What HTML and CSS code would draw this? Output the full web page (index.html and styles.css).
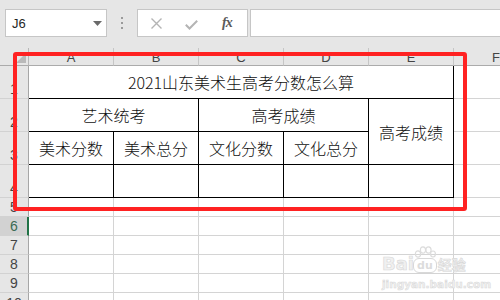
FILE: index.html
```html
<!DOCTYPE html>
<html lang="zh">
<head>
<meta charset="utf-8">
<title>Sheet</title>
<link rel="stylesheet" href="styles.css">
</head>
<body>
<div class="app">
  <div class="toolbar">
    <div class="namebox">
      <span class="ref">J6</span>
      <svg class="dd" width="9" height="5" viewBox="0 0 9 5"><path d="M0 0H9L4.5 5Z" fill="#6a6a6a"/></svg>
    </div>
    <div class="dots">
      <svg width="3" height="13" viewBox="0 0 3 13"><rect x="0" y="0" width="2" height="2" fill="#9a9a9a"/><rect x="0" y="5" width="2" height="2" fill="#9a9a9a"/><rect x="0" y="10" width="2" height="2" fill="#9a9a9a"/></svg>
    </div>
    <div class="fxbox">
      <svg class="ico-x" width="11" height="11" viewBox="0 0 11 11"><path d="M0.5 0.5L10.5 10.5M10.5 0.5L0.5 10.5" stroke="#b4b4b4" stroke-width="1.4" fill="none"/></svg>
      <svg class="ico-ok" width="13" height="10" viewBox="0 0 13 10"><path d="M0.8 4.8L4.5 8.5L12.2 0.8" stroke="#b4b4b4" stroke-width="2" fill="none"/></svg>
      <span class="fx">fx</span>
    </div>
    <div class="formula"></div>
  </div>

  <div class="sheet">
    <div class="corner"><span class="tri"></span></div>
    <div class="ch">A</div><div class="ch">B</div><div class="ch">C</div><div class="ch">D</div><div class="ch">E</div><div class="ch">F</div>

    <div class="rh">1</div>
    <div class="t span5">2021山东美术生高考分数怎么算</div>
    <div class="c"></div>

    <div class="rh">2</div>
    <div class="t span2">艺术统考</div>
    <div class="t span2">高考成绩</div>
    <div class="t rspan2">高考成绩</div>
    <div class="c"></div>

    <div class="rh">3</div>
    <div class="t">美术分数</div>
    <div class="t">美术总分</div>
    <div class="t">文化分数</div>
    <div class="t">文化总分</div>
    <div class="c"></div>

    <div class="rh">4</div>
    <div class="t"></div><div class="t"></div><div class="t"></div><div class="t"></div><div class="t"></div>
    <div class="c"></div>

    <div class="rh">5</div>
    <div class="c"></div><div class="c"></div><div class="c"></div><div class="c"></div><div class="c"></div><div class="c"></div>
    <div class="rh sel">6</div>
    <div class="c"></div><div class="c"></div><div class="c"></div><div class="c"></div><div class="c"></div><div class="c"></div>
    <div class="rh">7</div>
    <div class="c"></div><div class="c"></div><div class="c"></div><div class="c"></div><div class="c"></div><div class="c"></div>
    <div class="rh">8</div>
    <div class="c"></div><div class="c"></div><div class="c"></div><div class="c"></div><div class="c"></div><div class="c"></div>
    <div class="rh">9</div>
    <div class="c"></div><div class="c"></div><div class="c"></div><div class="c"></div><div class="c"></div><div class="c"></div>
    <div class="rh r10">10</div>
    <div class="c"></div><div class="c"></div><div class="c"></div><div class="c"></div><div class="c"></div><div class="c"></div>
  </div>

  <div class="highlight"></div>

  <div class="watermark">
    <div class="wm-top">
      <span class="wm-bai">Bai</span>
      <span class="wm-paw">
        <svg width="22" height="12" viewBox="0 0 22 12"><ellipse cx="4" cy="8" rx="2.6" ry="3.2" fill="none" stroke="#dcdcdc" stroke-width="1.2"/><ellipse cx="9" cy="4" rx="2.6" ry="3.2" fill="none" stroke="#dcdcdc" stroke-width="1.2"/><ellipse cx="14.5" cy="4" rx="2.6" ry="3.2" fill="none" stroke="#dcdcdc" stroke-width="1.2"/><ellipse cx="19" cy="8" rx="2.4" ry="3" fill="none" stroke="#dcdcdc" stroke-width="1.2"/></svg>
        <span class="wm-du">du</span>
      </span>
      <span class="wm-jy">经验</span>
    </div>
    <div class="wm-url">jingyan.baidu.com</div>
  </div>
</div>
</body>
</html>
```
FILE: styles.css
```css
html, body {
  margin: 0;
  padding: 0;
  background: #ffffff;
}

.app {
  position: relative;
  width: 500px;
  height: 300px;
  overflow: hidden;
  background: #ffffff;
  font-family: "Liberation Sans", Arial, sans-serif;
}

/* ---------- toolbar ---------- */
.toolbar {
  height: 48px;
  box-sizing: border-box;
  background: #e6e6e6;
  display: flex;
  align-items: flex-start;
  padding: 9px 0 0 5px;
}

.namebox {
  width: 102px;
  height: 28px;
  box-sizing: border-box;
  background: #ffffff;
  border: 1px solid #c6c6c6;
  display: flex;
  align-items: center;
  justify-content: space-between;
  padding: 0 4px 0 6px;
  font-size: 13px;
  color: #262626;
}

.dots {
  width: 30px;
  height: 28px;
  display: flex;
  align-items: center;
  justify-content: center;
  padding-left: 1px;
  box-sizing: border-box;
}

.fxbox {
  width: 111px;
  height: 28px;
  box-sizing: border-box;
  background: #ffffff;
  border: 1px solid #c6c6c6;
  display: flex;
  align-items: center;
  padding-left: 13px;
}

.ico-x {
  margin-top: 1px;
}

.ico-ok {
  margin-left: 23px;
  margin-top: 3px;
}

.fx {
  margin-left: 24px;
  font-family: "Liberation Serif", "DejaVu Serif", serif;
  font-style: italic;
  font-weight: bold;
  font-size: 14px;
  color: #5a5a5a;
  letter-spacing: -1px;
}

.formula {
  flex: 1;
  height: 28px;
  box-sizing: border-box;
  margin-left: 2px;
  margin-right: -3px;
  background: #ffffff;
  border: 1px solid #c6c6c6;
}

/* ---------- sheet grid ---------- */
.sheet {
  display: grid;
  grid-template-columns: 29px repeat(6, 85px);
  grid-template-rows: 18px repeat(4, 33px) repeat(6, 19px);
}

.sheet > div {
  box-sizing: border-box;
}

.corner {
  position: relative;
  background: #e6e6e6;
  border-right: 1px solid #b8b8b8;
  border-bottom: 1px solid #ababab;
}

.tri {
  position: absolute;
  right: 2px;
  bottom: 2px;
  width: 0;
  height: 0;
  border-left: 10px solid transparent;
  border-bottom: 10px solid #b9b9b9;
}

.ch {
  background: #e6e6e6;
  border-right: 1px solid #c6c6c6;
  border-bottom: 1px solid #ababab;
  color: #444444;
  font-size: 13px;
  text-align: center;
  line-height: 20px;
  overflow: hidden;
}

.rh {
  background: #e6e6e6;
  border-right: 1px solid #a6a6a6;
  border-bottom: 1px solid #d2d2d2;
  color: #444444;
  font-size: 14px;
  display: flex;
  align-items: flex-end;
  justify-content: center;
  padding-bottom: 1px;
  line-height: 16px;
  overflow: hidden;
}

.rh.sel {
  background: #d2d2d2;
  border-right: 2px solid #217346;
  color: #3a6a52;
  padding-left: 1px;
}

.rh.r10 {
  align-items: flex-start;
  padding-top: 2px;
}

.c {
  border-right: 1px solid #d4d4d4;
  border-bottom: 1px solid #d4d4d4;
}

.t {
  border-right: 1px solid #000000;
  border-bottom: 1px solid #000000;
  display: flex;
  align-items: center;
  justify-content: center;
  font-family: "Noto Sans CJK SC", "Liberation Sans", sans-serif;
  font-weight: 300;
  font-size: 16px;
  color: #111111;
  white-space: nowrap;
}

.span5 { grid-column: span 5; }
.span2 { grid-column: span 2; }
.rspan2 { grid-row: span 2; }

/* ---------- annotation overlay ---------- */
.highlight {
  position: absolute;
  left: 13px;
  top: 52px;
  width: 454px;
  height: 159px;
  box-sizing: border-box;
  border: 4px solid #ff2222;
  border-radius: 3px;
}

/* ---------- watermark ---------- */
.watermark {
  position: absolute;
  left: 382px;
  top: 246px;
  width: 92px;
  color: #e2e2e2;
  text-shadow: 0 0 1px #ffffff;
}

.wm-top {
  display: flex;
  align-items: flex-end;
  height: 27px;
}

.wm-bai {
  font-family: "DejaVu Sans", sans-serif;
  font-weight: bold;
  font-size: 18px;
  line-height: 18px;
  letter-spacing: 0px;
  -webkit-text-stroke: 0.6px #d8d8d8;
  color: #f0f0f0;
}

.wm-paw {
  display: flex;
  flex-direction: column;
  align-items: center;
  margin-left: -1px;
}

.wm-du {
  font-family: "DejaVu Sans", sans-serif;
  font-weight: bold;
  font-size: 11px;
  line-height: 13px;
  padding: 0 3px;
  border: 1.5px solid #d8d8d8;
  border-radius: 6px;
  color: #dcdcdc;
}

.wm-jy {
  font-family: "Noto Sans CJK SC", sans-serif;
  font-weight: bold;
  font-size: 14px;
  line-height: 17px;
  margin-left: 1px;
  color: #f0f0f0;
  -webkit-text-stroke: 0.6px #d8d8d8;
}

.wm-url {
  font-family: "DejaVu Sans", sans-serif;
  font-weight: bold;
  font-size: 10.5px;
  line-height: 14px;
  margin-top: 4px;
  color: #f0f0f0;
  -webkit-text-stroke: 0.5px #d8d8d8;
}
```
